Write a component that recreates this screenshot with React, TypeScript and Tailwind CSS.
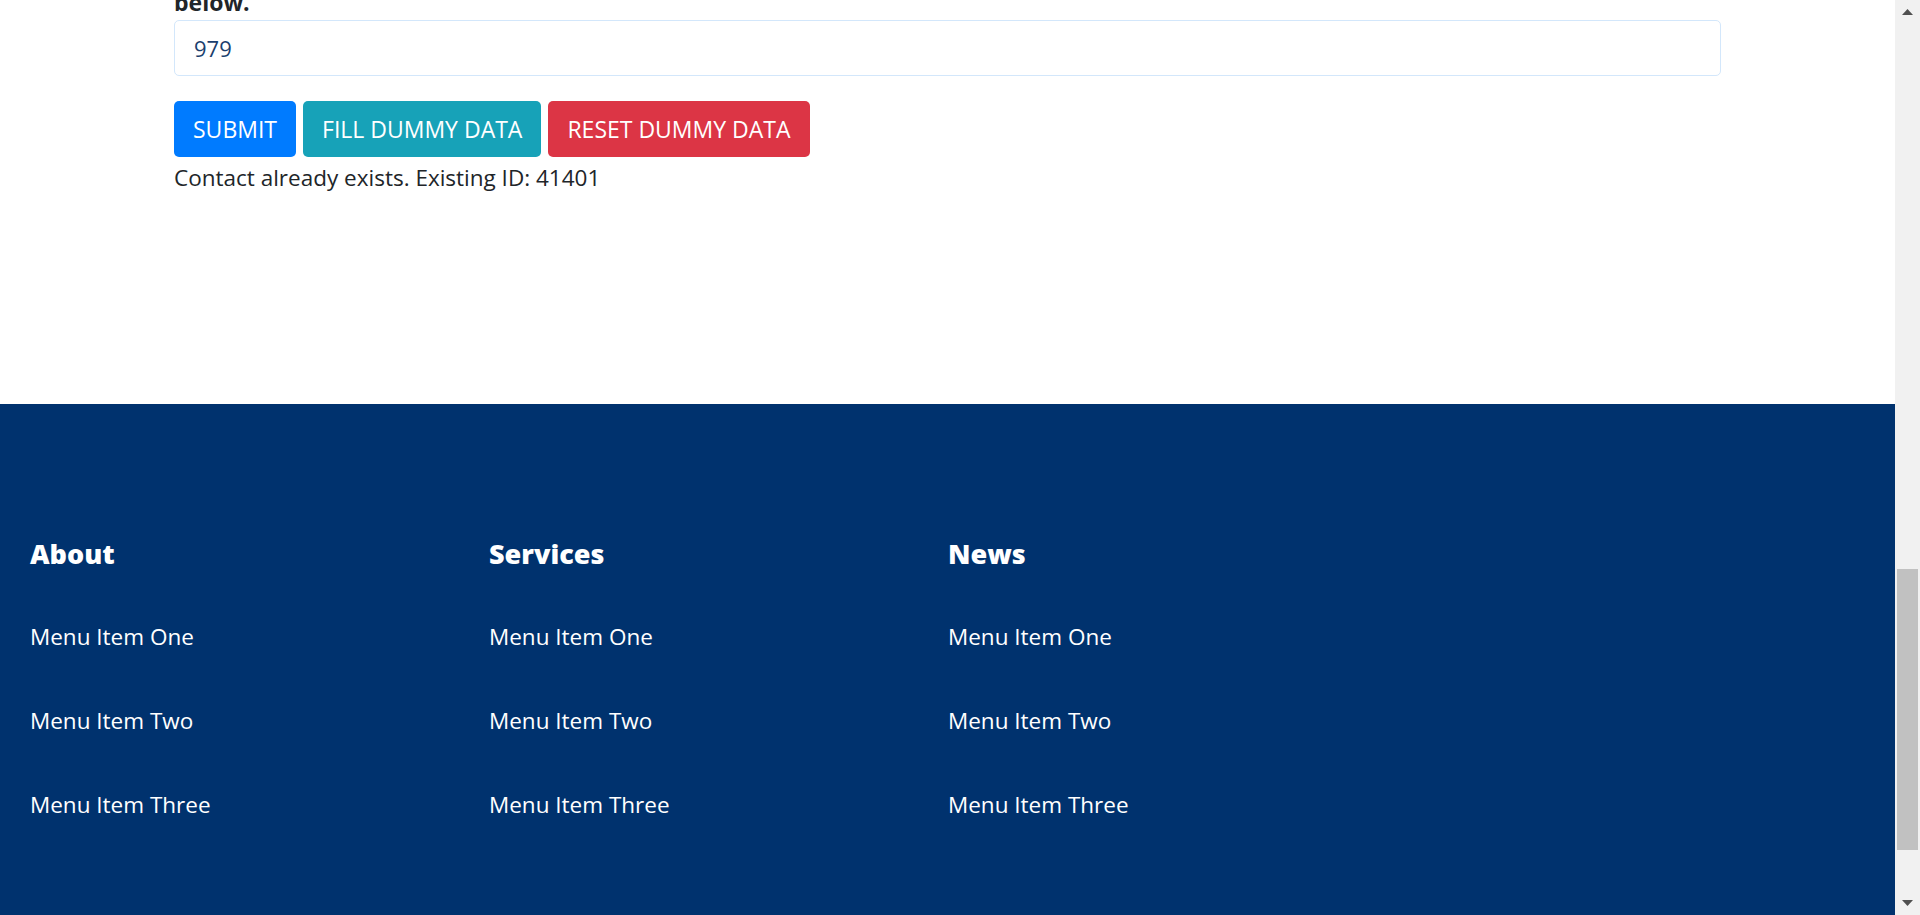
const columns = [
  { title: "About", items: ["Menu Item One", "Menu Item Two", "Menu Item Three"] },
  { title: "Services", items: ["Menu Item One", "Menu Item Two", "Menu Item Three"] },
  { title: "News", items: ["Menu Item One", "Menu Item Two", "Menu Item Three"] },
];

function Scrollbar() {
  return (
    <div className="flex h-full w-[25px] shrink-0 flex-col items-center bg-[#f1f1f1]">
      <div className="flex h-[24px] w-full items-center justify-center">
        <svg width="11" height="6" viewBox="0 0 11 6">
          <path d="M5.5 0 L11 6 L0 6 Z" fill="#505050" />
        </svg>
      </div>
      <div className="mt-[545px] h-[281px] w-[21px] bg-[#c1c1c1]" />
      <div className="mt-auto flex h-[24px] w-full items-center justify-center">
        <svg width="11" height="6" viewBox="0 0 11 6">
          <path d="M0 0 L11 0 L5.5 6 Z" fill="#505050" />
        </svg>
      </div>
    </div>
  );
}

export default function App() {
  return (
    <div className="flex h-[915px] w-full overflow-hidden bg-white font-['Open_Sans','Noto_Sans',sans-serif]">
      <div className="flex min-w-0 flex-1 flex-col">
        <section className="h-[404px] shrink-0 px-[174px]">
          <div className="h-[14px] overflow-hidden">
            <p className="-mt-[13px] text-[23px] leading-[30px] font-bold text-[#212529]">below.</p>
          </div>
          <div className="mt-[6px] flex h-[56px] items-center rounded-[5px] border border-[#d3e7fb] px-[19px] text-[22px] text-[#1b3f6e]">
            979
          </div>
          <div className="mt-[25px] flex gap-[7px]">
            <button className="h-[56px] rounded-[5px] bg-[#007bff] px-[19px] text-[23px] text-white">SUBMIT</button>
            <button className="h-[56px] rounded-[5px] bg-[#17a2b8] px-[19px] text-[23px] text-white">FILL DUMMY DATA</button>
            <button className="h-[56px] rounded-[5px] bg-[#dc3545] px-[19px] text-[23px] text-white">RESET DUMMY DATA</button>
          </div>
          <p className="mt-[6px] text-[22.5px] leading-[30px] text-[#212529]">Contact already exists. Existing ID: 41401</p>
        </section>
        <footer className="flex-1 bg-[#00326e] px-[30px] pt-[134px]">
          <div className="grid grid-cols-[459px_459px_459px]">
            {columns.map((col) => (
              <div key={col.title}>
                <h3 className="text-[27px] leading-[32px] font-extrabold text-white">{col.title}</h3>
                <ul className="mt-[52px] flex flex-col gap-[54px]">
                  {col.items.map((item) => (
                    <li key={item} className="text-[22.5px] leading-[30px] text-white">
                      {item}
                    </li>
                  ))}
                </ul>
              </div>
            ))}
          </div>
        </footer>
      </div>
      <Scrollbar />
    </div>
  );
}
